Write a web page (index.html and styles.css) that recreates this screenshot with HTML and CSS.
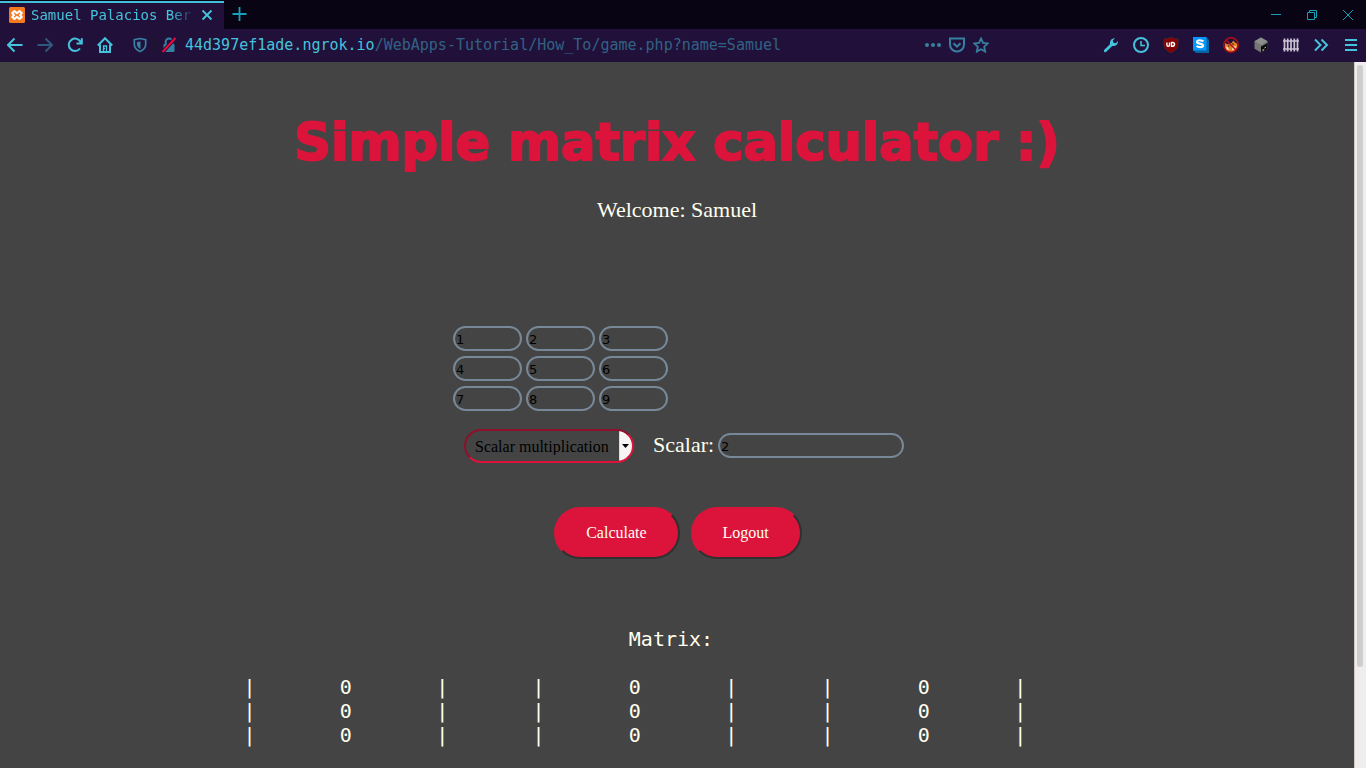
FILE: index.html
```html
<!DOCTYPE html>
<html lang="en">
<head>
<meta charset="utf-8">
<title>Samuel Palacios Ber</title>
<link rel="stylesheet" href="styles.css">
</head>
<body class="browser">
<header class="chrome">
  <div class="tabs">
    <div class="tab">
      <svg class="icon" viewBox="0 0 16 16" aria-hidden="true"><rect width="16" height="16" rx="1.500" fill="#f47a20"/><path d="M5.500 4L8 6.200 10.500 4l2.300 2L11 8l1.800 2-2.300 2L8 9.800 5.500 12l-2.300-2L5 8 3.200 6z" fill="none" stroke="#fff" stroke-width="2" stroke-linejoin="round"/></svg>
      <span class="tab-title">Samuel Palacios Ber</span>
      <button class="tab-close" aria-label="Close tab"><svg class="icon line" viewBox="0 0 16 16"><path d="M3.500 3.500l9 9M12.500 3.500l-9 9" stroke-width="1.800"/></svg></button>
    </div>
    <button class="tool" aria-label="New tab"><svg class="icon line teal" viewBox="0 0 16 16"><path d="M8.500 0v14M1.500 7h14" stroke-width="1.800"/></svg></button>
    <div class="window-buttons">
      <button aria-label="Minimize"><svg class="icon line teal" viewBox="0 0 16 16"><path d="M3 7.500h10" stroke-width="1"/></svg></button>
      <button aria-label="Restore"><svg class="icon line teal" viewBox="0 0 16 16"><path d="M3.500 5.500h7v7h-7zM5.500 5.500v-2h7v7h-2" stroke-width="1"/></svg></button>
      <button aria-label="Close"><svg class="icon line teal" viewBox="0 0 16 16"><path d="M3 3l10 10M13 3L3 13" stroke-width="1"/></svg></button>
    </div>
  </div>
  <nav class="toolbar" aria-label="Browser toolbar">
    <button class="tool" aria-label="Back"><svg class="icon line" viewBox="0 0 16 16"><path d="M15.500 8H1M7.500 1.500L1 8l6.500 6.500"/></svg></button>
    <button class="tool" aria-label="Forward"><svg class="icon line faded" viewBox="0 0 16 16"><path d="M.5 8H15M8.500 1.500L15 8l-6.500 6.500"/></svg></button>
    <button class="tool" aria-label="Reload"><svg class="icon line" viewBox="0 0 16 16"><path d="M13.800 5.500A6.200 6.200 0 1 0 13 11.500M9.500 6.500h5.300V1.200"/></svg></button>
    <button class="tool" aria-label="Home"><svg class="icon line" viewBox="0 0 16 16"><path d="M.8 8.500L8 1.200l7.200 7.300M3 7.500V15h10V7.500"/><path d="M6.500 15V9h3v6M6.500 11.500h1.500" stroke-width="1.300"/></svg></button>
    <div class="address">
      <button class="small" aria-label="Tracking protection"><svg class="icon line blue" viewBox="0 0 16 16"><path d="M8 1.500l5.700 1.200v4.500c0 3-2 5.500-5.700 7.300-3.700-1.800-5.700-4.300-5.700-7.300V2.700z" stroke-width="1.700"/><path d="M8.500 4.500v7.500C6 10.500 5 9 5 7.500V5z" class="solid"/></svg></button>
      <span class="divider"></span>
      <button class="small" aria-label="Connection not secure"><svg class="icon line blue" viewBox="0 0 16 16"><path d="M4.700 7V4.800a3.300 3.300 0 0 1 6.600 0V7"/><rect x="2.500" y="7" width="11" height="8" rx="1" class="solid"/><path d="M1.500 15L14.500 1" stroke="#21113a" stroke-width="4"/><path d="M1.500 15L14.500 1" stroke="#f0083e" stroke-width="2"/></svg></button>
      <div class="url"><span class="domain">44d397ef1ade.ngrok.io</span>/WebApps-Tutorial/How_To/game.php?name=Samuel</div>
      <button class="small" aria-label="Page actions"><svg class="icon blue" viewBox="0 0 16 16"><circle cx="2" cy="8" r="2"/><circle cx="8" cy="8" r="2"/><circle cx="14" cy="8" r="2"/></svg></button>
      <button class="small" aria-label="Save to Pocket"><svg class="icon line blue" viewBox="0 0 16 16"><path d="M1 1.500h14v6a7 7 0 0 1-14 0zM4.500 6.200L8 9.600l3.500-3.400"/></svg></button>
      <button class="small" aria-label="Bookmark"><svg class="icon line blue" viewBox="0 0 16 16"><path d="M8 1.500l2 4.300 4.700.600-3.500 3.300.900 4.800L8 12.200l-4.100 2.300.900-4.800L1.300 6.400 6 5.800z" stroke-width="1.800"/></svg></button>
    </div>
    <div class="extensions">
      <button class="tool" aria-label="Developer tools"><svg class="icon" viewBox="0 0 16 16"><path d="M1.300 14.700a1.400 1.400 0 0 1 0-2L7 7.200C6.500 4 8.500 1 12 1.200L9.800 3.500l.7 2.300 2.300.5L15 4c.2 3.500-2.500 5.500-5.800 5L3.300 14.700a1.400 1.400 0 0 1-2 0z"/></svg></button>
      <button class="tool" aria-label="History"><svg class="icon line" viewBox="0 0 16 16"><circle cx="8" cy="8" r="7"/><path d="M8 4v4.500h4" stroke-width="1.500"/></svg></button>
      <button class="tool" aria-label="uBlock Origin"><svg class="icon" viewBox="0 0 16 16"><path d="M8 .2c2 1.300 4.500 1.800 7 1.800v5c0 4-2.500 6.500-7 8.800C3.500 13.500 1 11 1 7V2C3.500 2 6 1.500 8 .2z" fill="#850000" stroke="#5b302e" stroke-width=".6"/><path d="M3.900 5.500V8a1.300 1.300 0 0 0 2.600 0V5.500M8.500 5.500v3.700h1.200a1.850 1.850 0 0 0 0-3.700z" fill="none" stroke="#fff" stroke-width="1.400"/></svg></button>
      <button class="tool" aria-label="Stylus"><svg class="icon" viewBox="0 0 16 16"><path d="M13 0l3 3v13H3l-3-3z" fill="#0864a2"/><path d="M0 0h13.500v13.500H0z" fill="#0796fa"/><path d="M10.300 4.500C9 3 4 2.500 4 4.900c0 2.300 6 1.100 6 3.600 0 2.400-5 2-6.300.4" fill="none" stroke="#fff" stroke-width="2.200"/></svg></button>
      <button class="tool" aria-label="Fox blocker"><svg class="icon" viewBox="0 0 16 16"><path d="M2 6l3 1.500L8.500 6l2-2.500 1 1.500 3 2-.5 4-2 3-4 1-4-.5L2 11z" fill="#e08128"/><path d="M3 9.500l2 1 1.500 3-3-1zM9.500 9l2 .5 2-1-1.500 4-3 1z" fill="#f6dfbd"/><path d="M5 9h1.500M9 7h2" stroke="#41210c"/><circle cx="8" cy="8" r="7.200" fill="none" stroke="#b80c12" stroke-width="1.400"/><path d="M3 3l10 10" stroke="#b80c12" stroke-width="1.500"/></svg></button>
      <button class="tool" aria-label="Cube"><svg class="icon" viewBox="0 0 16 16"><path d="M1.500 4.200L8 .5l6.500 3.700v7.600L8 15.500l-6.500-3.700z" fill="#767676"/><path d="M1.500 4.200L8 .5l6.500 3.700L8 8z" fill="#8d8d8d"/><path d="M14.500 6v5.800L8 15.500V9.500z" fill="#0a0a0a"/><path d="M9.500 13h1.500M11.500 11l1.200-.7" stroke="#fff"/></svg></button>
      <button class="tool" aria-label="Containers"><svg class="icon" viewBox="0 0 16 16"><path d="M1.500 1.500v13M4.700 1.500v13M8 1.500v13M11.300 1.500v13M14.500 1.500v13" stroke="#c9c3d5" stroke-width="1.700"/><path d="M0 4h16M0 12h16" stroke="#c9c3d5" stroke-width="1.300"/></svg></button>
      <button class="tool" aria-label="More tools"><svg class="icon line" viewBox="0 0 16 16"><path d="M2 2.500L7.500 8 2 13.500M8.500 2.500L14 8l-5.500 5.500"/></svg></button>
      <button class="tool" aria-label="Menu"><svg class="icon line" viewBox="0 0 16 16"><path d="M2 3h12M2 8h12M2 13h12"/></svg></button>
    </div>
  </nav>
</header>
<div class="viewport">
  <main class="page">
    <h1 class="title">Simple matrix calculator :)</h1>
    <p class="welcome">Welcome: Samuel</p>
    <form class="calculator">
      <div class="cells">
        <input class="field" type="text" value="1" aria-label="Row 1 column 1">
        <input class="field" type="text" value="2" aria-label="Row 1 column 2">
        <input class="field" type="text" value="3" aria-label="Row 1 column 3">
        <input class="field" type="text" value="4" aria-label="Row 2 column 1">
        <input class="field" type="text" value="5" aria-label="Row 2 column 2">
        <input class="field" type="text" value="6" aria-label="Row 2 column 3">
        <input class="field" type="text" value="7" aria-label="Row 3 column 1">
        <input class="field" type="text" value="8" aria-label="Row 3 column 2">
        <input class="field" type="text" value="9" aria-label="Row 3 column 3">
      </div>
      <div class="operation">
        <select class="select" aria-label="Operation"><option>Scalar multiplication</option></select>
        <div class="scalar">
          <label for="scalar">Scalar:</label>
          <input class="field scalar-field" id="scalar" type="text" value="2">
        </div>
      </div>
      <div class="actions">
        <button class="action" type="button">Calculate</button>
        <button class="action" type="button">Logout</button>
      </div>
    </form>
    <pre class="result">&#9;&#9;&#9;&#9;Matrix:

|&#9;0&#9;|&#9;|&#9;0&#9;|&#9;|&#9;0&#9;|&#9;
|&#9;0&#9;|&#9;|&#9;0&#9;|&#9;|&#9;0&#9;|&#9;
|&#9;0&#9;|&#9;|&#9;0&#9;|&#9;|&#9;0&#9;|&#9;</pre>
  </main>
  <div class="scrollbar"><div class="thumb"></div></div>
</div>
</body>
</html>
```

FILE: styles.css
```css
* {
  box-sizing: border-box;
}

.browser {
  margin: 0;
  height: 100vh;
  display: flex;
  flex-direction: column;
  overflow: hidden;
  background: #444;
}

button {
  border: 0;
  padding: 0;
  background: none;
}

/* Browser frame */
.chrome {
  flex: none;
  color: #45c3dc;
}

.tabs {
  display: flex;
  height: 29px;
  background: #090414;
}

.tab {
  display: flex;
  align-items: center;
  width: 224px;
  padding: 0 8px 2px 9px;
  margin-top: 1px;
  border-top: 2px solid #3fc0d9;
  background: #21113a;
}

.tab-title {
  flex: 1;
  min-width: 0;
  margin-left: 6px;
  white-space: nowrap;
  font: 14px/20px "DejaVu Sans Mono", monospace;
  mask-image: linear-gradient(to right, #000 84%, transparent 98%);
}

.tab-close {
  display: flex;
  width: 18px;
  justify-content: center;
}

.icon {
  display: block;
  flex: none;
  width: 16px;
  height: 16px;
  fill: #45c3dc;
}

.line {
  fill: none;
  stroke: #45c3dc;
  stroke-width: 2;
}

.teal {
  stroke: #18a0b8;
}

.faded {
  stroke: #2f587e;
}

.blue {
  fill: #3681a1;
}

.line.blue {
  fill: none;
  stroke: #3681a1;
}

.solid {
  fill: #3681a1;
  stroke: none;
}

.window-buttons {
  display: flex;
  margin-left: auto;
}

.window-buttons button {
  display: flex;
  align-items: center;
  justify-content: center;
  width: 36px;
}

.toolbar {
  display: flex;
  height: 33px;
  padding-bottom: 1px;
  background: #21113a;
}

.tool {
  display: flex;
  align-items: center;
  justify-content: center;
  width: 30px;
}

.address {
  flex: 1;
  display: flex;
  align-items: center;
  max-width: 881px;
  padding: 0 8px;
}

.small {
  display: flex;
  justify-content: center;
  width: 24px;
}

.divider {
  width: 1px;
  height: 16px;
  margin: 0 2px;
  background: #1b1722;
}

.url {
  flex: 1;
  min-width: 0;
  margin-left: 4px;
  overflow: hidden;
  white-space: nowrap;
  color: #326183;
  font: 15px/20px "DejaVu Sans Mono", monospace;
}

.domain {
  color: #45c3dc;
}

.extensions {
  display: flex;
  margin-left: auto;
}

/* Calculator page */
.viewport {
  flex: 1;
  min-height: 0;
  display: flex;
}

.page {
  flex: 1;
  display: flex;
  flex-direction: column;
  align-items: center;
  overflow: hidden;
  color: #fffff0;
  font: 22px/24px "Liberation Serif", serif;
}

.title {
  margin: 45px 0 0;
  color: #dc143c;
  font: 900 51px/72px "Arial Black", "DejaVu Sans", sans-serif;
  -webkit-text-stroke: 2px #dc143c;
}

.welcome {
  margin: 19px 0 104px;
}

.calculator {
  width: 448px;
}

.cells {
  display: grid;
  grid-template-columns: repeat(3, 69px);
  gap: 5px 4px;
}

.field {
  width: 100%;
  height: 25px;
  padding: 2px 1px 0;
  border: 2px solid #778899;
  border-radius: 13px;
  background: transparent;
  color: #000;
  font: 13px "DejaVu Sans", sans-serif;
}

.operation {
  display: flex;
  align-items: center;
  margin: 18px 0 44px 11px;
}

.select {
  flex: none;
  appearance: none;
  width: 170px;
  height: 34px;
  padding: 0 9px;
  border: 2px solid;
  border-color: #900f2b #dc143c #dc143c #900f2b;
  border-radius: 17px;
  background: url("data:image/svg+xml,%3Csvg xmlns='http://www.w3.org/2000/svg' width='13' height='30'%3E%3Cpath fill='%23f6f5f4' d='M0 0h13v30H0z'/%3E%3Cpath fill='%23ddd' d='M0 0h1v30H0z'/%3E%3Cpath d='M3 13h7l-3.500 4z'/%3E%3C/svg%3E") right center no-repeat;
  color: #000;
  font: 16px "Liberation Serif", serif;
}

.scalar {
  display: flex;
  flex: none;
  gap: 4px;
  margin-left: 19px;
  padding-bottom: 2px;
}

.scalar-field {
  width: 186px;
}

.actions {
  display: flex;
  justify-content: center;
  gap: 11px;
  padding-left: 2px;
}

.action {
  height: 52px;
  padding: 0 31px 0 30px;
  border: 2px solid;
  border-color: #dc143c #303030 #303030 #dc143c;
  border-radius: 26px;
  background: #dc143c;
  color: #fffff0;
  font: 16px "Liberation Serif", serif;
}

.result {
  margin: 68px 0 0;
  font: 20px/24px "DejaVu Sans Mono", monospace;
  tab-size: 8;
}

.scrollbar {
  width: 12px;
  padding: 3px 2px;
  border-left: 1px solid #cfc9c4;
  background: #f0eeed;
}

.thumb {
  width: 6px;
  height: 86%;
  border-radius: 3px;
  background: #cecece;
}
```
